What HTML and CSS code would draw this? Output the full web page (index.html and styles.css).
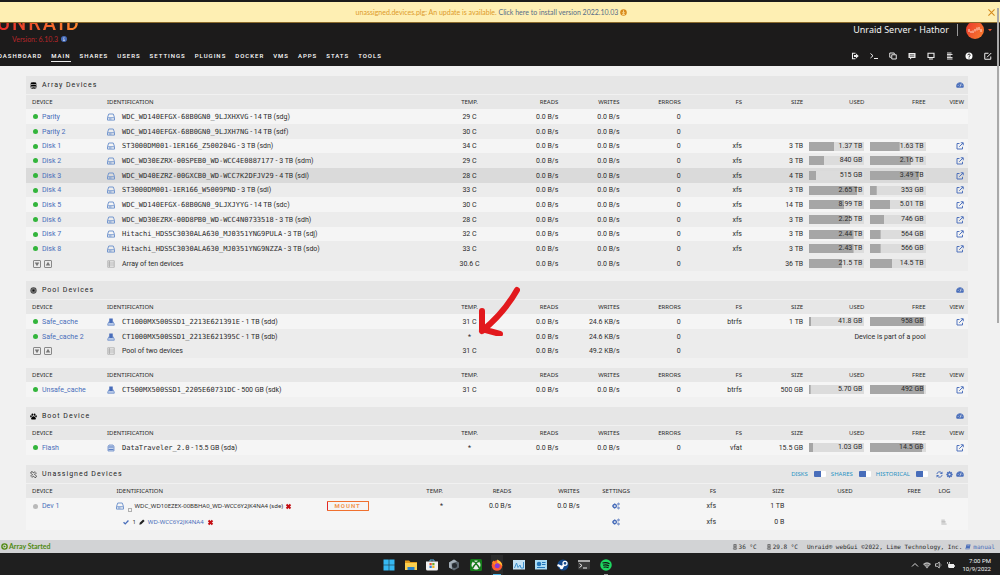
FILE: index.html
```html
<!DOCTYPE html>
<html lang="en">
<head>
<meta charset="utf-8">
<title>Hathor/Main</title>
<link rel="stylesheet" href="styles.css">
</head>
<body>
<svg class="defs" aria-hidden="true">
  <symbol id="i-disk" viewBox="0 0 16 16"><path d="M3.5 2h9L15 9v5.2H1V9zM1.3 9.5h13.4M4 12h5" fill="none" stroke="#6f92cc" stroke-width="1.9" stroke-linejoin="round"/></symbol>
  <symbol id="i-ssd" viewBox="0 0 16 16"><path d="M4 7 1.500 12v2.500h13V12L12 7" fill="#b9cae8" stroke="#6a8bc8" stroke-width="1.5"/><path d="M4.500 1h7v9h-7z" fill="#486dba"/></symbol>
  <symbol id="i-flash" viewBox="0 0 16 16"><path d="M4 2h8l2 3v9H2V5z" fill="#c6d4ec" stroke="#6a8bc8" stroke-width="1.6"/><path d="M3 6h10M3 11h10" stroke="#5d80c4" stroke-width="2"/></symbol>
  <symbol id="i-list" viewBox="0 0 16 16"><path d="M1.500 1.500h13v13h-13zM5 2v12M2 6h12M2 10h12" fill="none" stroke="#a3a3a3" stroke-width="1.4"/></symbol>
  <symbol id="i-view" viewBox="0 0 16 16"><path d="M7 3H2v11h11V9.500M9.500 1.500h5v5M14 2 6.500 9.500" fill="none" stroke="#486dba" stroke-width="1.9"/></symbol>
  <symbol id="i-dash" viewBox="0 0 16 16"><path d="M1.500 13.500A7.500 7.500 0 1 1 14.500 13.500z" fill="#486dba"/><path d="M8 11.500 10.500 5M3.500 9h1.500M5 5.500l1 1M11.500 9h1.200" stroke="#e8e8e8" stroke-width="1.500"/></symbol>
  <symbol id="i-db" viewBox="0 0 16 16"><ellipse cx="8" cy="3" rx="7" ry="2.200"/><path d="M1 5.200c2 1.800 12 1.800 14 0v2.600c-2 2-12 2-14 0zM1 9.200c2 1.800 12 1.800 14 0v2.200c-2 2-12 2-14 0zM1 12.800c2 1.800 12 1.800 14 0v1c-2 2.500-12 2.500-14 0z"/></symbol>
  <symbol id="i-pool" viewBox="0 0 16 16"><circle cx="8" cy="8" r="7.200" fill="#4a4a4a"/><circle cx="8" cy="8" r="4.600" fill="none" stroke="#a8a8a8"/><circle cx="8" cy="8" r="1.700" fill="#111"/></symbol>
  <symbol id="i-paw" viewBox="0 0 16 16"><ellipse cx="5.500" cy="3.700" rx="2" ry="2.800"/><ellipse cx="10.500" cy="3.700" rx="2" ry="2.800"/><ellipse cx="2.200" cy="7.600" rx="1.900" ry="2.500"/><ellipse cx="13.800" cy="7.600" rx="1.900" ry="2.500"/><path d="M8 7.500c3 0 5.500 3.800 5.500 5.800 0 2.400-3 1.500-5.500 1.500s-5.500.9-5.500-1.500c0-2 2.500-5.800 5.500-5.800z"/></symbol>
  <symbol id="i-unlink" viewBox="0 0 16 16"><path d="M6.500 9.500 2.500 5.500a2.500 2.500 0 0 1 3.500-3.500l3 3M9.500 6.500l4.500 4.500a2.500 2.500 0 0 1-3.500 3.500l-3.500-3.500M11 1v3M15 5h-3M1 11h3M5 15v-3" fill="none" stroke="#222" stroke-width="1.800"/></symbol>
  <symbol id="i-gears" viewBox="0 0 16 16"><circle cx="5.500" cy="8" r="3.300" fill="none" stroke="#486dba" stroke-width="2.600"/><path d="M5.500 2.500v11M0 8h11" stroke="#486dba" stroke-width="1.600"/><circle cx="5.500" cy="8" r="1.700" fill="#f4f4f4"/><circle cx="13" cy="4" r="1.700" fill="none" stroke="#486dba" stroke-width="1.800"/><circle cx="13" cy="12" r="1.700" fill="none" stroke="#486dba" stroke-width="1.800"/></symbol>
  <symbol id="i-gear" viewBox="0 0 16 16"><path d="M8 0.800v14.400M0.800 8h14.400M3 3l10 10M13 3 3 13" stroke="#486dba" stroke-width="3"/><circle cx="8" cy="8" r="5.200" fill="#486dba"/><circle cx="8" cy="8" r="2.400" fill="#e8e8e8"/></symbol>
  <symbol id="i-refresh" viewBox="0 0 16 16"><path d="M2 7a6 6 0 0 1 10.500-3M14 9a6 6 0 0 1-10.500 3" fill="none" stroke="#486dba" stroke-width="2.200"/><path d="M14.800 1v6h-6zM1.200 15V9h6z" fill="#486dba"/></symbol>
  <symbol id="i-x" viewBox="0 0 16 16"><path d="M3.500 3.500l9 9M12.500 3.500l-9 9" stroke="#c40d12" stroke-width="4.500"/></symbol>
  <symbol id="i-therm" viewBox="0 0 16 16"><path d="M5 1h6v8.500a4 4 0 1 1-6 0z" fill="none" stroke="#444" stroke-width="1.800"/><path d="M8 4v9" stroke="#444" stroke-width="2.500"/></symbol>
</svg>

<div class="notice" role="status">
  <span>unassigned.devices.plg: An update is available. <a href="#">Click here to install version 2022.10.03</a></span>
  <svg class="ico7" viewBox="0 0 16 16"><circle cx="8" cy="8" r="7.500" fill="#d98a1c"/><path d="M8 3v6M5 7.500 8 11l3-3.500M5 12.500h6" stroke="#feefb3" stroke-width="1.800" fill="none"/></svg>
  <button class="notice-close" aria-label="Close"><svg viewBox="0 0 16 16"><path d="M1 1l14 14M15 1 1 15" stroke="#d48a1d" stroke-width="2.400" fill="none"/></svg></button>
</div>

<header class="top">
  <div class="brand-row">
    <div class="brand">
      <a class="logo" href="#">UNRAID</a>
      <div class="version">Version: 6.10.3 <svg class="ico6" viewBox="0 0 16 16"><circle cx="8" cy="8" r="8" fill="#486dba"/><path d="M8 3v2.200M6 7.200h2V12M5.800 12h4.400" stroke="#dfe7f5" stroke-width="1.900" fill="none"/></svg></div>
    </div>
    <div class="server">
      <span class="server-name">Unraid Server <b>•</b> Hathor</span>
      <button class="account" aria-label="Account">
        <svg class="avatar" viewBox="0 0 18 18"><defs><linearGradient id="av" x1="0" x2="1" y1="0" y2="0.600"><stop offset="0" stop-color="#e8352c"/><stop offset="1" stop-color="#f9762e"/></linearGradient></defs><circle cx="9" cy="9" r="9" fill="url(#av)"/><path d="M3 8v3M5 10v2M7 9.500v2.500M9 8v2.500M11 6.500v3M13 6v3M15 8v3" stroke="#ffd9cc" stroke-width="1"/></svg>
        <svg class="caret" viewBox="0 0 8 8"><path d="M0 2h8L4 6.500z" fill="#e8502c"/></svg>
      </button>
    </div>
  </div>
  <div class="nav-row">
    <nav class="menu">
      <a href="#">DASHBOARD</a><a href="#" class="active">MAIN</a><a href="#">SHARES</a><a href="#">USERS</a><a href="#">SETTINGS</a><a href="#">PLUGINS</a><a href="#">DOCKER</a><a href="#">VMS</a><a href="#">APPS</a><a href="#">STATS</a><a href="#">TOOLS</a>
    </nav>
    <div class="tools">
      <button aria-label="Logout"><svg viewBox="0 0 16 16"><path d="M9 2.500H3v11h6" fill="none" stroke="#eee" stroke-width="2.200"/><path d="M6 6.200h4V3l5.500 5-5.500 5V9.800H6z" fill="#eee"/></svg></button>
      <button aria-label="Terminal"><svg viewBox="0 0 16 16"><path d="M1 3l5 4.500L1 12M8 13h8" fill="none" stroke="#eee" stroke-width="2"/></svg></button>
      <button aria-label="Files"><svg viewBox="0 0 16 16"><path d="M5.500 5.500h9v8.500h-9zM4 10.500H1.500V2h9v2.500" fill="none" stroke="#eee" stroke-width="1.900"/></svg></button>
      <button aria-label="Feedback"><svg viewBox="0 0 16 16"><path d="M1 2h14v10H7l-3 3v-3H1z" fill="#eee"/><path d="M3.500 5.500h9M3.500 8.500h9" stroke="#333" stroke-width="1.500"/></svg></button>
      <button aria-label="Info"><svg viewBox="0 0 16 16"><path d="M2 2.500h12v8.500H2z" fill="none" stroke="#eee" stroke-width="2.200"/><path d="M4 13h8v2H4z" fill="#eee"/></svg></button>
      <button aria-label="Log"><svg viewBox="0 0 16 16"><path d="M2 2h9M2 5h11M2 8h8M2 11h11M2 14h11" stroke="#ddd" stroke-width="2.100"/></svg></button>
      <button aria-label="Help"><svg viewBox="0 0 16 16"><circle cx="8" cy="8" r="7" fill="#fff"/><path d="M5.500 6.500C5.500 3.500 10.500 3.500 10.500 6.300 10.500 8 8 8 8 9.800M8 11v2" fill="none" stroke="#222" stroke-width="2"/></svg></button>
      <button aria-label="Edit"><svg viewBox="0 0 16 16"><path d="M9 2.500H1.500v12h12V9M6 10.500 14.500 2" fill="none" stroke="#eee" stroke-width="2"/></svg></button>
    </div>
  </div>
</header>

<main class="content">
  <section>
    <h2 class="title"><svg class="ico7"><use href="#i-db"/></svg>Array Devices<a class="right" href="#" aria-label="Dashboard"><svg class="ico8"><use href="#i-dash"/></svg></a></h2>
    <table class="disks striped">
      <thead><tr><th class="c-dev">DEVICE</th><th class="c-id">IDENTIFICATION</th><th class="c-temp">TEMP.</th><th>READS</th><th>WRITES</th><th>ERRORS</th><th>FS</th><th>SIZE</th><th>USED</th><th>FREE</th><th class="c-view">VIEW</th></tr></thead>
      <tbody>
        <tr><td><i class="dot"></i><a href="#">Parity</a></td><td><svg class="ico8"><use href="#i-disk"/></svg><code>WDC_WD140EFGX-68B0GN0_9LJXHXVG</code> - 14 TB (sdg)</td><td>29 C</td><td>0.0 B/s</td><td>0.0 B/s</td><td>0</td><td></td><td></td><td></td><td></td><td></td></tr>
        <tr><td><i class="dot"></i><a href="#">Parity 2</a></td><td><svg class="ico8"><use href="#i-disk"/></svg><code>WDC_WD140EFGX-68B0GN0_9LJXH7NG</code> - 14 TB (sdf)</td><td>30 C</td><td>0.0 B/s</td><td>0.0 B/s</td><td>0</td><td></td><td></td><td></td><td></td><td></td></tr>
        <tr><td><i class="dot"></i><a href="#">Disk 1</a></td><td><svg class="ico8"><use href="#i-disk"/></svg><code>ST3000DM001-1ER166_Z500204G</code> - 3 TB (sdn)</td><td>34 C</td><td>0.0 B/s</td><td>0.0 B/s</td><td>0</td><td>xfs</td><td>3 TB</td><td><div class="bar" style="background-size:46% 100%">1.37 TB</div></td><td><div class="bar" style="background-size:53% 100%">1.63 TB</div></td><td><a href="#" aria-label="View"><svg class="ico8"><use href="#i-view"/></svg></a></td></tr>
        <tr><td><i class="dot"></i><a href="#">Disk 2</a></td><td><svg class="ico8"><use href="#i-disk"/></svg><code>WDC_WD30EZRX-00SPEB0_WD-WCC4E0887177</code> - 3 TB (sdm)</td><td>29 C</td><td>0.0 B/s</td><td>0.0 B/s</td><td>0</td><td>xfs</td><td>3 TB</td><td><div class="bar" style="background-size:28% 100%">840 GB</div></td><td><div class="bar" style="background-size:73% 100%">2.16 TB</div></td><td><a href="#" aria-label="View"><svg class="ico8"><use href="#i-view"/></svg></a></td></tr>
        <tr class="hover"><td><i class="dot"></i><a href="#">Disk 3</a></td><td><svg class="ico8"><use href="#i-disk"/></svg><code>WDC_WD40EZRZ-00GXCB0_WD-WCC7K2DFJV29</code> - 4 TB (sdi)</td><td>28 C</td><td>0.0 B/s</td><td>0.0 B/s</td><td>0</td><td>xfs</td><td>4 TB</td><td><div class="bar" style="background-size:13% 100%">515 GB</div></td><td><div class="bar" style="background-size:88% 100%">3.49 TB</div></td><td><a href="#" aria-label="View"><svg class="ico8"><use href="#i-view"/></svg></a></td></tr>
        <tr><td><i class="dot"></i><a href="#">Disk 4</a></td><td><svg class="ico8"><use href="#i-disk"/></svg><code>ST3000DM001-1ER166_W5009PND</code> - 3 TB (sdl)</td><td>33 C</td><td>0.0 B/s</td><td>0.0 B/s</td><td>0</td><td>xfs</td><td>3 TB</td><td><div class="bar" style="background-size:88% 100%">2.65 TB</div></td><td><div class="bar" style="background-size:12% 100%">353 GB</div></td><td><a href="#" aria-label="View"><svg class="ico8"><use href="#i-view"/></svg></a></td></tr>
        <tr><td><i class="dot"></i><a href="#">Disk 5</a></td><td><svg class="ico8"><use href="#i-disk"/></svg><code>WDC_WD140EFGX-68B0GN0_9LJXJYYG</code> - 14 TB (sdc)</td><td>30 C</td><td>0.0 B/s</td><td>0.0 B/s</td><td>0</td><td>xfs</td><td>14 TB</td><td><div class="bar" style="background-size:64% 100%">8.99 TB</div></td><td><div class="bar" style="background-size:36% 100%">5.01 TB</div></td><td><a href="#" aria-label="View"><svg class="ico8"><use href="#i-view"/></svg></a></td></tr>
        <tr><td><i class="dot"></i><a href="#">Disk 6</a></td><td><svg class="ico8"><use href="#i-disk"/></svg><code>WDC_WD30EZRX-00D8PB0_WD-WCC4N0733518</code> - 3 TB (sdh)</td><td>28 C</td><td>0.0 B/s</td><td>0.0 B/s</td><td>0</td><td>xfs</td><td>3 TB</td><td><div class="bar" style="background-size:75% 100%">2.25 TB</div></td><td><div class="bar" style="background-size:25% 100%">746 GB</div></td><td><a href="#" aria-label="View"><svg class="ico8"><use href="#i-view"/></svg></a></td></tr>
        <tr><td><i class="dot"></i><a href="#">Disk 7</a></td><td><svg class="ico8"><use href="#i-disk"/></svg><code>Hitachi_HDS5C3030ALA630_MJ0351YNG9PULA</code> - 3 TB (sdj)</td><td>32 C</td><td>0.0 B/s</td><td>0.0 B/s</td><td>0</td><td>xfs</td><td>3 TB</td><td><div class="bar" style="background-size:81% 100%">2.44 TB</div></td><td><div class="bar" style="background-size:19% 100%">564 GB</div></td><td><a href="#" aria-label="View"><svg class="ico8"><use href="#i-view"/></svg></a></td></tr>
        <tr><td><i class="dot"></i><a href="#">Disk 8</a></td><td><svg class="ico8"><use href="#i-disk"/></svg><code>Hitachi_HDS5C3030ALA630_MJ0351YNG9NZZA</code> - 3 TB (sdo)</td><td>33 C</td><td>0.0 B/s</td><td>0.0 B/s</td><td>0</td><td>xfs</td><td>3 TB</td><td><div class="bar" style="background-size:81% 100%">2.43 TB</div></td><td><div class="bar" style="background-size:19% 100%">566 GB</div></td><td><a href="#" aria-label="View"><svg class="ico8"><use href="#i-view"/></svg></a></td></tr>
        <tr class="total"><td><button class="spin" aria-label="Spin down"><svg viewBox="0 0 8 8"><path d="M1 2h6L4 7z" fill="#777"/></svg></button><button class="spin" aria-label="Spin up"><svg viewBox="0 0 8 8"><path d="M1 6h6L4 1z" fill="#777"/></svg></button></td><td><svg class="ico8"><use href="#i-list"/></svg>Array of ten devices</td><td>30.6 C</td><td>0.0 B/s</td><td>0.0 B/s</td><td>0</td><td></td><td>36 TB</td><td><div class="bar" style="background-size:60% 100%">21.5 TB</div></td><td><div class="bar" style="background-size:40% 100%">14.5 TB</div></td><td></td></tr>
      </tbody>
    </table>
  </section>

  <section class="pool">
    <h2 class="title"><svg class="ico7"><use href="#i-pool"/></svg>Pool Devices<a class="right" href="#" aria-label="Dashboard"><svg class="ico8"><use href="#i-dash"/></svg></a></h2>
    <table class="disks striped">
      <thead><tr><th class="c-dev">DEVICE</th><th class="c-id">IDENTIFICATION</th><th class="c-temp">TEMP.</th><th>READS</th><th>WRITES</th><th>ERRORS</th><th>FS</th><th>SIZE</th><th>USED</th><th>FREE</th><th class="c-view">VIEW</th></tr></thead>
      <tbody>
        <tr><td><i class="dot"></i><a href="#">Safe_cache</a></td><td><svg class="ico8"><use href="#i-ssd"/></svg><code>CT1000MX500SSD1_2213E621391E</code> - 1 TB (sdd)</td><td>31 C</td><td>0.0 B/s</td><td>24.6 KB/s</td><td>0</td><td>btrfs</td><td>1 TB</td><td><div class="bar" style="background-size:4% 100%">41.8 GB</div></td><td><div class="bar" style="background-size:96% 100%">958 GB</div></td><td><a href="#" aria-label="View"><svg class="ico8"><use href="#i-view"/></svg></a></td></tr>
        <tr><td><i class="dot"></i><a href="#">Safe_cache 2</a></td><td><svg class="ico8"><use href="#i-ssd"/></svg><code>CT1000MX500SSD1_2213E621395C</code> - 1 TB (sdb)</td><td>*</td><td>0.0 B/s</td><td>24.6 KB/s</td><td>0</td><td colspan="4">Device is part of a pool</td><td></td></tr>
        <tr class="total"><td><button class="spin" aria-label="Spin down"><svg viewBox="0 0 8 8"><path d="M1 2h6L4 7z" fill="#777"/></svg></button><button class="spin" aria-label="Spin up"><svg viewBox="0 0 8 8"><path d="M1 6h6L4 1z" fill="#777"/></svg></button></td><td><svg class="ico8"><use href="#i-list"/></svg>Pool of two devices</td><td>31 C</td><td>0.0 B/s</td><td>49.2 KB/s</td><td>0</td><td></td><td></td><td></td><td></td><td></td></tr>
      </tbody>
    </table>
    <svg class="arrow" viewBox="0 0 42 50" aria-hidden="true"><path d="M39 4Q26 27 4 45M4 25v20M4 43l18 5" fill="none" stroke="#e2191d" stroke-width="6" stroke-linecap="round" stroke-linejoin="round"/></svg>
  </section>

  <section>
    <table class="disks">
      <thead><tr><th class="c-dev">DEVICE</th><th class="c-id">IDENTIFICATION</th><th class="c-temp">TEMP.</th><th>READS</th><th>WRITES</th><th>ERRORS</th><th>FS</th><th>SIZE</th><th>USED</th><th>FREE</th><th class="c-view">VIEW</th></tr></thead>
      <tbody>
        <tr><td><i class="dot"></i><a href="#">Unsafe_cache</a></td><td><svg class="ico8"><use href="#i-ssd"/></svg><code>CT500MX500SSD1_2205E60731DC</code> - 500 GB (sdk)</td><td>31 C</td><td>0.0 B/s</td><td>0.0 B/s</td><td>0</td><td>btrfs</td><td>500 GB</td><td><div class="bar" style="background-size:3% 100%">5.70 GB</div></td><td><div class="bar" style="background-size:97% 100%">492 GB</div></td><td><a href="#" aria-label="View"><svg class="ico8"><use href="#i-view"/></svg></a></td></tr>
      </tbody>
    </table>
  </section>

  <section>
    <h2 class="title"><svg class="ico7"><use href="#i-paw"/></svg>Boot Device<a class="right" href="#" aria-label="Dashboard"><svg class="ico8"><use href="#i-dash"/></svg></a></h2>
    <table class="disks">
      <thead><tr><th class="c-dev">DEVICE</th><th class="c-id">IDENTIFICATION</th><th class="c-temp">TEMP.</th><th>READS</th><th>WRITES</th><th>ERRORS</th><th>FS</th><th>SIZE</th><th>USED</th><th>FREE</th><th class="c-view">VIEW</th></tr></thead>
      <tbody>
        <tr><td><i class="dot"></i><a href="#">Flash</a></td><td><svg class="ico8"><use href="#i-flash"/></svg><code>DataTraveler_2.0</code> - 15.5 GB (sda)</td><td>*</td><td>0.0 B/s</td><td>0.0 B/s</td><td>0</td><td>vfat</td><td>15.5 GB</td><td><div class="bar" style="background-size:8% 100%">1.03 GB</div></td><td><div class="bar" style="background-size:93% 100%">14.5 GB</div></td><td><a href="#" aria-label="View"><svg class="ico8"><use href="#i-view"/></svg></a></td></tr>
      </tbody>
    </table>
  </section>

  <section>
    <h2 class="title"><svg class="ico7"><use href="#i-unlink"/></svg>Unassigned Devices
      <span class="right switches">
        <label>DISKS<input type="checkbox" checked></label>
        <label>SHARES<input type="checkbox" checked></label>
        <label>HISTORICAL<input type="checkbox" checked></label>
        <span class="acts"><a href="#" aria-label="Refresh"><svg class="ico7"><use href="#i-refresh"/></svg></a><a href="#" aria-label="Settings"><svg class="ico7"><use href="#i-gear"/></svg></a><a href="#" aria-label="Dashboard"><svg class="ico8"><use href="#i-dash"/></svg></a></span>
      </span>
    </h2>
    <table class="unassigned">
      <thead><tr><th class="u-dev">DEVICE</th><th class="u-id">IDENTIFICATION</th><th>TEMP.</th><th>READS</th><th>WRITES</th><th class="u-set">SETTINGS</th><th>FS</th><th>SIZE</th><th>USED</th><th>FREE</th><th class="u-log">LOG</th></tr></thead>
      <tbody>
        <tr><td><i class="dot off"></i><a href="#">Dev 1</a></td><td><div class="ident"><svg class="ico8"><use href="#i-disk"/></svg><i class="plus"></i><span>WDC_WD10EZEX-00BBHA0_WD-WCC6Y2JK4NA4 (sde)</span><svg class="ico7"><use href="#i-x"/></svg><button class="mount">MOUNT</button></div></td><td>*</td><td>0.0 B/s</td><td>0.0 B/s</td><td><svg class="ico8"><use href="#i-gears"/></svg></td><td>xfs</td><td>1 TB</td><td></td><td></td><td></td></tr>
        <tr><td></td><td><div class="ident part"><svg class="ico6" viewBox="0 0 16 16"><path d="M1.500 8.500 6 13 14.500 4" fill="none" stroke="#486dba" stroke-width="3.500"/></svg><span>1</span><svg class="ico6" viewBox="0 0 16 16"><path d="M1 15l1-5L11 1l4 4-9 9z" fill="#222"/></svg><a href="#">WD-WCC6Y2JK4NA4</a><svg class="ico7"><use href="#i-x"/></svg></div></td><td></td><td></td><td></td><td><svg class="ico8"><use href="#i-gears"/></svg></td><td>xfs</td><td>0 B</td><td></td><td></td><td><svg class="ico6" viewBox="0 0 16 16"><path d="M1 3h9M1 6.500h11M1 10h11M1 13.500h14" stroke="#b4b4b4" stroke-width="2.200"/></svg></td></tr>
      </tbody>
    </table>
  </section>
</main>

<footer class="status">
  <span class="started"><svg class="ico7" viewBox="0 0 16 16"><circle cx="8" cy="8" r="6" fill="none" stroke="#4f8a10" stroke-width="3"/><path d="M6 5l5 3-5 3z" fill="#4f8a10"/></svg>Array Started</span>
  <span class="sensor"><svg class="ico6"><use href="#i-therm"/></svg>36 °C</span>
  <span class="sensor"><svg class="ico6"><use href="#i-therm"/></svg>29.8 °C</span>
  <span>Unraid® webGui ©2022, Lime Technology, Inc.</span>
  <a href="#"><svg class="ico6" viewBox="0 0 16 16"><path d="M4 1h11l-3 13H1z" fill="#486dba"/><path d="M3 12h9M6 4.500h6" stroke="#d2d3d5" stroke-width="1.300"/></svg>manual</a>
</footer>

<div class="taskbar">
  <div class="apps">
    <button aria-label="Start"><svg viewBox="0 0 24 24"><path d="M1 1h10.500v10.500H1zM12.500 1H23v10.500H12.500zM1 12.500h10.500V23H1zM12.500 12.500H23V23H12.500z" fill="#35b8f2"/></svg></button>
    <button aria-label="Explorer"><svg viewBox="0 0 24 24"><path d="M0 3h8l3 3h13v6H0z" fill="#e09a1b"/><path d="M0 8h24v14H0z" fill="#fcd04f"/><path d="M5 16h14v6H5z" fill="#2b82c9"/></svg></button>
    <button aria-label="Store"><svg viewBox="0 0 24 24"><path d="M8 5V2h8v3" stroke="#5bb4e8" stroke-width="2" fill="none"/><path d="M0 5h24v15q0 3-3 3H3q-3 0-3-3z" fill="#f1f1f1"/><path d="M7 8h4.500v4.500H7z" fill="#e8502c"/><path d="M12.500 8H17v4.500h-4.500z" fill="#6aac2d"/><path d="M7 13.500h4.500V18H7z" fill="#2b82d9"/><path d="M12.500 13.500H17V18h-4.500z" fill="#f4b61f"/></svg></button>
    <button aria-label="App"><svg viewBox="0 0 24 24"><path d="M12 1 22 7v10l-10 6L2 17V7z" fill="#5d6770"/><path d="M12 1 2 7v10l6 3-1-11 11-4z" fill="#a4afb8"/><circle cx="13" cy="13" r="5" fill="#262b30"/></svg></button>
    <button aria-label="Xbox"><svg viewBox="0 0 24 24"><rect width="24" height="24" rx="3" fill="#157b1a"/><circle cx="12" cy="12" r="9" fill="#eee"/><path d="M5 19C7 14 10 11 12 9c2 2 5 5 7 10M6 5c2 0 4 1 6 3 2-2 4-3 6-3" fill="none" stroke="#157b1a" stroke-width="3"/></svg></button>
    <button class="current" aria-label="Firefox"><svg viewBox="0 0 24 24"><circle cx="12" cy="13" r="10.500" fill="#ff5a30"/><path d="M12 1c7 3 11 8 10.500 14C21 10 16 9 13 9z" fill="#ffc933"/><path d="M2 7l3-4 3 4 5 1-5 5z" fill="#ff8a1f"/><circle cx="12.500" cy="13.500" r="5" fill="#8a3ad4"/></svg></button>
    <button aria-label="Monitor"><svg viewBox="0 0 24 24"><rect y="2" width="24" height="19" fill="#c3e2f5"/><path d="M3 18 7 8l3 9 4-5 2 6h5V6" fill="none" stroke="#3f92cf" stroke-width="2"/></svg></button>
    <button aria-label="Control"><svg viewBox="0 0 24 24"><rect y="2" width="24" height="19" fill="#a9dbf5"/><circle cx="8" cy="10" r="4.500" fill="#2377bb"/><path d="M14 7h7M14 11h7M4 17h16" stroke="#2377bb" stroke-width="2"/></svg></button>
    <button aria-label="Steam"><svg viewBox="0 0 24 24"><circle cx="12" cy="12" r="11" fill="#14498c"/><circle cx="16" cy="8.500" r="4" fill="none" stroke="#fff" stroke-width="2.500"/><path d="M1 12l9 4 4-4" stroke="#fff" stroke-width="4" fill="none"/><circle cx="9" cy="17" r="3.500" fill="#fff"/></svg></button>
    <button aria-label="Terminal"><svg viewBox="0 0 24 24"><rect y="2" width="24" height="19" rx="2" fill="#3a3a3a"/><path d="M0 2h24v4H0z" fill="#a9a9a9"/><path d="M3 9l5 4-5 4M10 18h8" stroke="#eee" stroke-width="2" fill="none"/></svg></button>
    <button class="running" aria-label="Spotify"><svg viewBox="0 0 24 24"><circle cx="12" cy="12" r="11.500" fill="#1ed760"/><path d="M5 8q8-2 14 1.500M6 12.500q7-2 12 1.500M7 16.500q6-1.500 10 1" stroke="#121212" stroke-width="2.200" fill="none"/></svg></button>
  </div>
  <div class="tray">
    <svg viewBox="0 0 16 16"><path d="M2 11l6-6 6 6" fill="none" stroke="#eee" stroke-width="1.800"/></svg>
    <svg viewBox="0 0 16 16"><path d="M0 6q8-7 16 0L8 15z" fill="#bbb"/><path d="M2.500 8.500q5.500-5 11 0M5 11q3-3 6 0" fill="none" stroke="#222" stroke-width="1.200"/></svg>
    <svg viewBox="0 0 16 16"><path d="M1 5.500h3.500L8.500 2v12l-4-3.500H1z" fill="none" stroke="#eee" stroke-width="1.500"/><path d="M11 5q2.500 3 0 6" fill="none" stroke="#999" stroke-width="1.500"/></svg>
    <svg viewBox="0 0 16 16"><path d="M3 6h11v8H3zM14 8.500h2v3h-2z" fill="#eee"/><path d="M1 2v3q2 3 4 0V2M3 7v5" stroke="#eee" stroke-width="1.600" fill="none"/></svg>
    <div class="clock">7:00 PM<br>10/9/2022</div>
  </div>
</div>
<div class="scroll" aria-hidden="true"></div>
</body>
</html>
```

FILE: styles.css
```css
* { box-sizing: border-box; }

body {
  margin: 0;
  min-height: 100vh;
  display: flex;
  flex-direction: column;
  background: #f1f1f1;
  color: #2b2b2b;
  font: 7px/12px Roboto, "Noto Sans", sans-serif;
}

a { color: #486dba; text-decoration: none; }
button { margin: 0; padding: 0; border: 0; background: none; font: inherit; color: inherit; }
svg { display: block; }
.defs { position: absolute; width: 0; height: 0; }
.ico6 { width: 6px; height: 6px; flex: none; }
.ico7 { width: 7px; height: 7px; flex: none; }
.ico8 { width: 8px; height: 8px; flex: none; }

/* update notice lying over the header */
.notice {
  position: absolute;
  top: 2px;
  left: 0;
  right: 0;
  height: 21px;
  display: flex;
  align-items: center;
  justify-content: center;
  gap: 2px;
  padding-right: 17px;
  background: #feefb3;
  border-bottom: 1px solid #8a6a2c;
  color: #dd9a2a;
  font-family: Lato, sans-serif;
}
.notice a { color: #566d88; }
.notice-close { position: absolute; right: 5px; width: 7px; height: 7px; }

.top { background: #1c1b1b; color: #f2f2f2; overflow: hidden; }
.brand-row { display: flex; justify-content: space-between; height: 46px; }
.brand { display: flex; flex-direction: column; justify-content: flex-end; }
.logo {
  margin-left: -3px;
  font: 500 20px/18px Roboto, sans-serif;
  letter-spacing: 2px;
  background: linear-gradient(90deg, #e22828, #ff8c2f);
  -webkit-background-clip: text;
  background-clip: text;
  color: transparent;
}
.version { display: flex; align-items: center; gap: 3px; padding-left: 12px; font: 7px/14px Lato, sans-serif; color: #b8262a; }
.server { display: flex; align-items: center; padding: 14px 8px 0 0; }
.server-name {
  padding-right: 8px;
  border-right: 1px solid #9a9a9a;
  font: 9px/12px "Noto Sans", sans-serif;
}
.server-name b { font-weight: 400; color: #aaa; }
.account { display: flex; align-items: center; gap: 4px; padding-left: 8px; }
.avatar { width: 18px; height: 18px; }
.caret { width: 4px; height: 4px; }

.nav-row { display: flex; justify-content: space-between; height: 20px; padding-right: 8px; }
.menu { display: flex; gap: 9px; margin-left: -2px; font: 500 6px/12px Roboto, sans-serif; letter-spacing: 1px; }
.menu a { height: 16px; padding-top: 4px; color: #fff; }
.menu .active { border-bottom: 1px solid #ececec; }
.tools { display: flex; align-items: center; gap: 11px; }
.tools svg { width: 8px; height: 8px; }

.content { flex: 1; padding: 10px 32px 0 26px; }
section { margin-bottom: 10px; }
.title {
  display: flex;
  align-items: center;
  gap: 5px;
  height: 18px;
  margin: 0 0 1px;
  padding: 0 4px;
  background: #e6e6e6;
  font: 400 7px/18px Roboto, sans-serif;
  letter-spacing: 1px;
  color: #1f1f1f;
}
.right { margin-left: auto; }

table { width: 100%; table-layout: fixed; border-collapse: collapse; }
th, td { padding: 0; text-align: right; font-weight: 400; white-space: nowrap; }
th { height: 14px; background: #e7e7e7; font: 6px/12px "Noto Sans", sans-serif; }
td { height: 15px; vertical-align: middle; }
tbody tr { background: #f5f5f5; }
.striped tbody tr:nth-child(even), .striped .total { background: #ececec; }
.striped tbody tr:nth-child(3n) td { height: 14px; }
.striped tbody .hover { background: #dadada; }

th:nth-child(-n+2), td:nth-child(-n+2) { text-align: left; }
th:first-child, td:first-child { padding-left: 6px; }
td > svg, td > a > svg { display: inline-block; vertical-align: middle; }
.disks td:nth-child(2) > svg { margin-right: 7px; }
.disks th { width: 6.5%; }
.disks .c-dev { width: 8.6%; }
.disks .c-id { width: auto; }
.disks .c-view { width: 4.5%; }
.disks th:nth-child(3), .disks td:nth-child(3) { padding-left: 6px; text-align: center; }
.disks th:last-child, .disks td:last-child { padding-right: 4px; }
code { font: 7px/12px "DejaVu Sans Mono", monospace; }

.dot {
  display: inline-block;
  width: 5px;
  height: 5px;
  margin: 0 4px 0 1px;
  border-radius: 50%;
  background: #33b53c;
  vertical-align: middle;
}
.dot.off { background: #b9b9b9; }
.bar {
  height: 9px;
  margin-left: 6px;
  padding-right: 2px;
  line-height: 9px;
  background: linear-gradient(#a6a6a6, #a6a6a6) no-repeat #dcdcdc;
}
.spin {
  display: inline-block;
  width: 8px;
  height: 8px;
  margin: 0 2px 0 1px;
  border: 1px solid #888;
  border-radius: 1px;
  vertical-align: middle;
}

.pool { position: relative; }
.arrow { position: absolute; left: 48%; top: 5px; width: 42px; height: 50px; }

.switches { display: flex; align-items: center; gap: 5px; font: 6px/12px "Noto Sans", sans-serif; letter-spacing: 0; color: #2a93c4; }
.switches label { display: flex; align-items: center; gap: 6px; }
.switches input {
  appearance: none;
  width: 12px;
  height: 6px;
  margin: 0;
  border-radius: 1px;
  background: linear-gradient(90deg, #486dba 7px, #fff 7px);
}
.acts { display: flex; align-items: center; gap: 3px; padding-left: 3px; }

.unassigned th { width: 7.25%; }
.unassigned .u-dev { width: 9.6%; }
.unassigned .u-id { width: auto; }
.unassigned .u-log { width: 5%; }
.unassigned td { height: 16px; }
.unassigned th:nth-child(6), .unassigned td:nth-child(6) { padding-left: 5px; text-align: center; }
.unassigned th:last-child, .unassigned td:last-child { text-align: center; }
.ident { display: flex; align-items: center; gap: 2px; font: 6px/12px "Noto Sans", sans-serif; }
.part { gap: 3px; padding-left: 7px; }
.plus { width: 4px; height: 4px; margin-left: 2px; border: 1px solid #b0b0b0; align-self: flex-end; }
.mount {
  width: 42px;
  height: 10px;
  margin: 0 6px 0 auto;
  border: 1px solid #f0702e;
  border-radius: 1px;
  border-left-color: #e22828;
  font: 700 6px/8px Roboto, sans-serif;
  letter-spacing: 1px;
  color: #f29550;
}

.status {
  display: flex;
  align-items: center;
  gap: 9px;
  height: 13px;
  padding: 0 5px 0 1px;
  background: #d2d3d5;
  font: 6px/13px "DejaVu Sans Mono", monospace;
}
.status span { display: flex; align-items: center; gap: 1px; }
.status .started { margin-right: auto; color: #4f8a10; font: 700 7px/13px Lato, sans-serif; }
.status a { display: flex; align-items: center; gap: 2px; margin-left: -6px; }

.taskbar {
  display: grid;
  grid-template-columns: 1fr auto 1fr;
  align-items: center;
  height: 23px;
  padding-right: 5px;
  background: #1f1f1f;
  color: #f4f4f4;
}
.apps { grid-column: 2; display: flex; justify-content: space-between; width: 229px; }
.apps button { height: 20px; }
.apps svg { width: 12px; height: 12px; }
.apps .current { background: linear-gradient(#4cb4e6, #4cb4e6) bottom / 8px 1px no-repeat #2b2b2b; }
.apps .running { background: linear-gradient(#9a9a9a, #9a9a9a) bottom / 4px 1px no-repeat; }
.tray { display: flex; align-items: center; justify-content: flex-end; gap: 4px; padding-right: 4px; }
.tray svg { width: 8px; height: 8px; }
.clock { margin-left: 3px; text-align: right; font: 6px/8px Roboto, sans-serif; }

.scroll { position: absolute; right: 1px; top: 8px; width: 2px; height: 315px; background: #a9a9a9; }
```
